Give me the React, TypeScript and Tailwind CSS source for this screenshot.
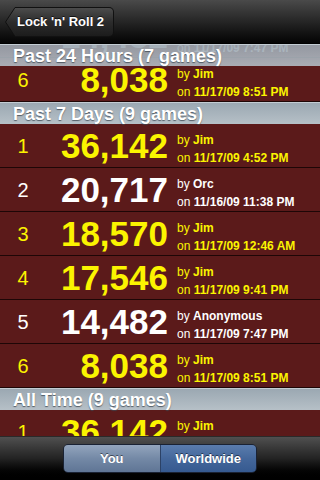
import React from 'react';

type Row = { rank: number; score: string; by: string; on: string; mine: boolean };

const past24: Row[] = [
  { rank: 5, score: '14,482', by: 'Anonymous', on: '11/17/09 7:47 PM', mine: false },
  { rank: 6, score: '8,038', by: 'Jim', on: '11/17/09 8:51 PM', mine: true },
];

const past7: Row[] = [
  { rank: 1, score: '36,142', by: 'Jim', on: '11/17/09 4:52 PM', mine: true },
  { rank: 2, score: '20,717', by: 'Orc', on: '11/16/09 11:38 PM', mine: false },
  { rank: 3, score: '18,570', by: 'Jim', on: '11/17/09 12:46 AM', mine: true },
  { rank: 4, score: '17,546', by: 'Jim', on: '11/17/09 9:41 PM', mine: true },
  { rank: 5, score: '14,482', by: 'Anonymous', on: '11/17/09 7:47 PM', mine: false },
  { rank: 6, score: '8,038', by: 'Jim', on: '11/17/09 8:51 PM', mine: true },
];

const allTime: Row[] = [
  { rank: 1, score: '36,142', by: 'Jim', on: '11/17/09 4:52 PM', mine: true },
];

function ScoreRow({ row }: { row: Row }) {
  const color = row.mine ? 'text-[#fbf400]' : 'text-white';
  return (
    <div className={`flex items-center h-[44px] bg-[#5b1a1a] border-b border-[#1e0606] ${color}`}>
      <div className="w-[46px] text-center text-[20px] leading-none">{row.rank}</div>
      <div className="w-[122px] text-right text-[35px] font-bold leading-none">{row.score}</div>
      <div className="pl-[9px] pt-[7px] flex flex-col text-[12px] leading-[18px]">
        <div>
          by <span className="font-bold">{row.by}</span>
        </div>
        <div>
          on <span className="font-bold">{row.on}</span>
        </div>
      </div>
    </div>
  );
}

function SectionHeader({ title, overlay }: { title: string; overlay?: boolean }) {
  return (
    <div
      className={`h-[22px] flex items-center px-[13px] border-t border-[#c3ccd3] text-white font-bold text-[18px] leading-none [text-shadow:0_1px_1px_rgba(60,70,80,0.8)] ${
        overlay
          ? 'bg-gradient-to-b from-[#9aa6b0]/90 to-[#b3bdc5]/90'
          : 'bg-gradient-to-b from-[#9ba8b2] to-[#b6c0c7]'
      }`}
    >
      {title}
    </div>
  );
}

export default function App() {
  return (
    <div className="w-[320px] h-[480px] overflow-hidden flex flex-col bg-black font-['Liberation_Sans',Arial,sans-serif]">
      {/* Nav bar */}
      <div className="h-[44px] shrink-0 flex items-center pl-[5px] bg-gradient-to-b from-[#4a4a4a] via-[#262626] via-50% to-[#050505] border-b border-[#000]">
        <div className="relative h-[30px] flex items-center">
          <svg width="12" height="30" viewBox="0 0 12 30" className="block">
            <defs>
              <linearGradient id="bk" x1="0" y1="0" x2="0" y2="1">
                <stop offset="0" stopColor="#4c4c4c" />
                <stop offset="0.5" stopColor="#2c2c2c" />
                <stop offset="1" stopColor="#1c1c1c" />
              </linearGradient>
            </defs>
            <path d="M12 0.5 L10 0.5 L0.5 15 L10 29.5 L12 29.5 Z" fill="url(#bk)" stroke="#111" strokeWidth="1" />
          </svg>
          <div className="h-[30px] -ml-[1px] pl-[1px] pr-[9px] flex items-center rounded-r-[5px] border border-l-0 border-[#111] bg-gradient-to-b from-[#4c4c4c] via-[#2c2c2c] to-[#1c1c1c] text-white font-bold text-[13px] [text-shadow:0_-1px_0_rgba(0,0,0,0.7)]">
            Lock 'n' Roll 2
          </div>
        </div>
      </div>

      {/* List */}
      <div className="relative flex-1 overflow-hidden bg-[#5b1a1a]">
        <div className="-mt-[30px]">
          {past24.map((r, i) => (
            <ScoreRow key={'a' + i} row={r} />
          ))}
          <SectionHeader title="Past 7 Days (9 games)" />
          {past7.map((r, i) => (
            <ScoreRow key={'b' + i} row={r} />
          ))}
          <SectionHeader title="All Time (9 games)" />
          {allTime.map((r, i) => (
            <ScoreRow key={'c' + i} row={r} />
          ))}
        </div>
        <div className="absolute top-0 left-0 right-0">
          <SectionHeader title="Past 24 Hours (7 games)" overlay />
        </div>
      </div>

      {/* Toolbar */}
      <div className="h-[44px] shrink-0 flex items-center justify-center bg-gradient-to-b from-[#505050] via-[#232323] via-50% to-[#000] border-t border-[#2a2a2a]">
        <div className="flex h-[29px] w-[194px] rounded-[5px] overflow-hidden border border-[#1a2233] text-white font-bold text-[13px] [text-shadow:0_-1px_0_rgba(0,0,0,0.5)]">
          <div className="flex-1 flex items-center justify-center bg-gradient-to-b from-[#93a5bd] via-[#7489a6] to-[#5f7595] border-r border-[#2c4266]">
            You
          </div>
          <div className="flex-1 flex items-center justify-center bg-gradient-to-b from-[#5a7cad] via-[#44679b] to-[#365a90]">
            Worldwide
          </div>
        </div>
      </div>
    </div>
  );
}
